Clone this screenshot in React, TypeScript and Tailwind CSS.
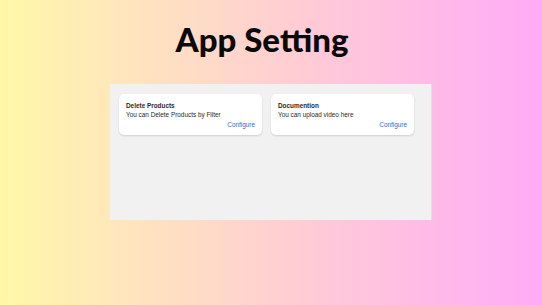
import React from "react";

const cards = [
  { title: "Delete Products", text: "You can Delete Products by Filter" },
  { title: "Documention", text: "You can upload video here" },
];

function SettingCard({ title, text }: { title: string; text: string }) {
  return (
    <div className="w-[143px] bg-white rounded-[5px] shadow-[0_1px_2px_rgba(0,0,0,0.14)] px-[7px] pt-[7px] pb-[6px] text-[6.4px] leading-[9.3px] text-[#2a2a2a] font-['Liberation_Sans',Arial,sans-serif]">
      <div className="font-bold">{title}</div>
      <div>{text}</div>
      <div className="flex justify-end">
        <button className="text-[#2c6ecb]">Configure</button>
      </div>
    </div>
  );
}

export default function App() {
  return (
    <div className="w-full h-[305px] overflow-hidden flex flex-col items-center bg-linear-to-r from-[#fff8a8] via-[#ffd0d0] to-[#ffaaf6]">
      <div className="pt-[23px] pr-[18px]">
        <h1 className="text-[33px] leading-[33px] font-black text-[#0a0a0a] font-['Lato',sans-serif]">
          App Setting
        </h1>
      </div>
      <div className="mt-[28px] w-[322px] h-[136px] bg-[#f1f1f1] border-r border-[#e0e0e0] pl-[9px] pt-[10px]">
        <div className="flex gap-[9px]">
          {cards.map((c) => (
            <SettingCard key={c.title} title={c.title} text={c.text} />
          ))}
        </div>
      </div>
    </div>
  );
}
